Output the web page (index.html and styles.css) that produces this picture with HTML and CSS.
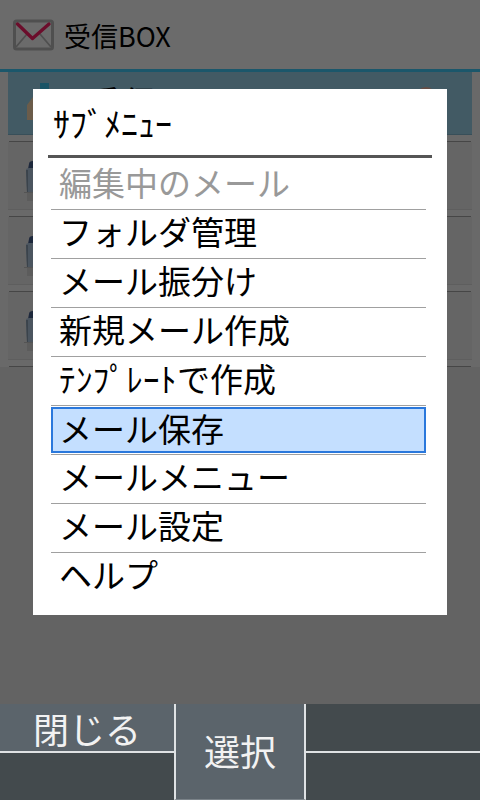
FILE: index.html
```html
<!DOCTYPE html>
<html lang="ja">
<head>
<meta charset="utf-8">
<title>受信BOX</title>
<link rel="stylesheet" href="styles.css">
</head>
<body>
<div class="screen">
  <header class="appbar">
    <svg class="mail" width="41" height="32" viewBox="0 0 41 32">
      <rect x="1.5" y="2" width="38" height="28" rx="2" fill="#fff" stroke="#bcbcbc" stroke-width="3"/>
      <path d="M3 28 L14 15 M38 28 L27 15" stroke="#bcbcbc" stroke-width="1.8" fill="none"/>
      <path d="M4.5 5 L19.5 19.5 L36 5" stroke="#ff1f68" stroke-width="3.4" fill="none" stroke-linecap="round" stroke-linejoin="round"/>
    </svg>
    <span class="apptitle">受信BOX</span>
  </header>
  <main class="list">
    <div class="row">
      <div class="body body-on">
        <svg class="tray" width="41" height="40" viewBox="0 0 41 40"><rect x="14" y="0" width="9" height="15" fill="#3cc8f4"/><path d="M1 22 L7 14 H41 V37 H1Z" fill="#ffdcb0"/><path d="M7 20 H41 V14 H7Z" fill="#f0c898"/></svg>
        <span class="rowtext">受信</span>
        <svg class="badge" width="20" height="20" viewBox="0 0 20 20"><circle cx="10" cy="10" r="10" fill="#f4b8a4"/></svg>
      </div>
      <div class="rule"></div>
    </div>
    <div class="row">
      <div class="body"><svg class="jar" width="24" height="42" viewBox="0 0 24 42"><use href="#jar"/></svg></div>
      <div class="rule"></div>
    </div>
    <div class="row">
      <div class="body"><svg class="jar" width="24" height="42" viewBox="0 0 24 42"><use href="#jar"/></svg></div>
      <div class="rule"></div>
    </div>
    <div class="row">
      <div class="body"><svg class="jar" width="24" height="42" viewBox="0 0 24 42"><use href="#jar"/></svg></div>
      <div class="rule"></div>
    </div>
    <svg width="0" height="0" class="defs"><defs><g id="jar">
      <path d="M4 8 L5 3 Q5 0 9 0 H24 V8Z" fill="#465f8f"/>
      <path d="M2 9 Q2 7 5 7 H24 V32 H3Z" fill="#b2cae2"/>
      <path d="M2 9 H4 V32 H3Z" fill="#8ca0b4"/>
      <rect x="0" y="31" width="24" height="1" fill="#c8c8c8"/>
      <rect x="3" y="32" width="21" height="8" fill="#dcdcdc"/>
    </g></defs></svg>
  </main>
  <div class="dim"></div>
  <section class="dialog">
    <h1 class="dlgtitle">ｻﾌﾞﾒﾆｭｰ</h1>
    <ul class="menu">
      <li class="off">編集中のメール</li>
      <li>フォルダ管理</li>
      <li>メール振分け</li>
      <li>新規メール作成</li>
      <li><span class="hw">ﾃﾝﾌﾟﾚｰﾄ</span>で作成</li>
      <li class="cur"><div class="sel">メール保存</div></li>
      <li>メールメニュー</li>
      <li>メール設定</li>
      <li class="last">ヘルプ</li>
    </ul>
  </section>
  <footer class="keys">
    <div class="key"><div class="half lit">閉じる</div><div class="half"></div></div>
    <div class="key center">選択</div>
    <div class="key"><div class="half"></div><div class="half"></div></div>
  </footer>
</div>
</body>
</html>
```
FILE: styles.css
```css
* { box-sizing: border-box; }
html, body { margin: 0; padding: 0; }
body { font-family: "Noto Sans CJK JP", "Noto Sans", sans-serif; background: #ececec; }
.screen { position: relative; width: 480px; height: 800px; overflow: hidden; display: flex; flex-direction: column; background: #ececec; }
.appbar { height: 72px; flex: none; display: flex; align-items: center; gap: 10px; padding: 0 0 0 13px; background: #ffffff; border-bottom: 3px solid #40cfff; }
.mail { flex: none; }
.apptitle { font-size: 27px; line-height: 32px; color: #000; padding-top: 2px; }
.list { flex: 1; display: flex; flex-direction: column; }
.row { flex: none; padding: 0 8px; background: #fbfbfb; }
.body { height: 68px; display: flex; align-items: flex-start; background: #f0f0f0; border-bottom: 1px solid #e0e0e0; padding: 19px 0 0 16px; }
.body-on { height: 63px; background: #9dd6ee; border-bottom: 1px solid #86bcd4; padding: 11px 0 0 18px; }
.rule { height: 1px; margin: 6px 1px 0; background: #a8a8a8; }
.tray { flex: none; }
.rowtext { font-size: 36px; line-height: 36px; margin: 1px 0 0 18px; color: #000; white-space: nowrap; }
.badge { flex: none; margin: 4px 0 0 259px; }
.jar { flex: none; }
.defs { position: absolute; }
.dim { position: absolute; inset: 0; background: rgba(0,0,0,0.58); }
.dialog { position: absolute; left: 33px; top: 89px; width: 414px; height: 526px; background: #fff; padding: 0 15px; }
.dlgtitle { margin: 0; height: 69px; padding: 0 0 0 5px; font-size: 34px; font-weight: 400; line-height: 67px; color: #000; border-bottom: 3px solid #555; white-space: nowrap; }
.menu { list-style: none; margin: 0; padding: 0 6px 0 3px; }
.menu li { height: 49px; padding-left: 8px; font-size: 33px; line-height: 42px; color: #000; border-bottom: 1px solid #a0a0a0; white-space: nowrap; }
.menu li:first-child { height: 52px; line-height: 48px; }
.menu li.off { color: #999; }
.hw { letter-spacing: 0.4px; }
.menu li.cur { padding: 1px 0 0; }
.sel { height: 46px; padding-left: 6px; line-height: 38px; background: #c4dfff; border: 2px solid #2a78dc; }
.menu li.last { border-bottom: none; }
.keys { position: absolute; left: 0; right: 0; bottom: 0; height: 96px; display: flex; background: #434a4d; color: #fff; }
.key { flex: 1; display: flex; flex-direction: column; min-width: 0; }
.half { height: 49px; text-align: center; font-size: 36px; line-height: 49px; color: #f2f2f2; border-bottom: 2px solid #dfe2e4; }
.half + .half { height: 47px; border-bottom: none; }
.half.lit { background: #5b646b; }
.key.center { flex: none; width: 132px; background: #5b646b; border-left: 2px solid #dfe2e4; border-right: 2px solid #dfe2e4; border-bottom: 1px solid #7b8389; align-items: center; justify-content: center; font-size: 36px; color: #f2f2f2; padding-bottom: 4px; }
```
